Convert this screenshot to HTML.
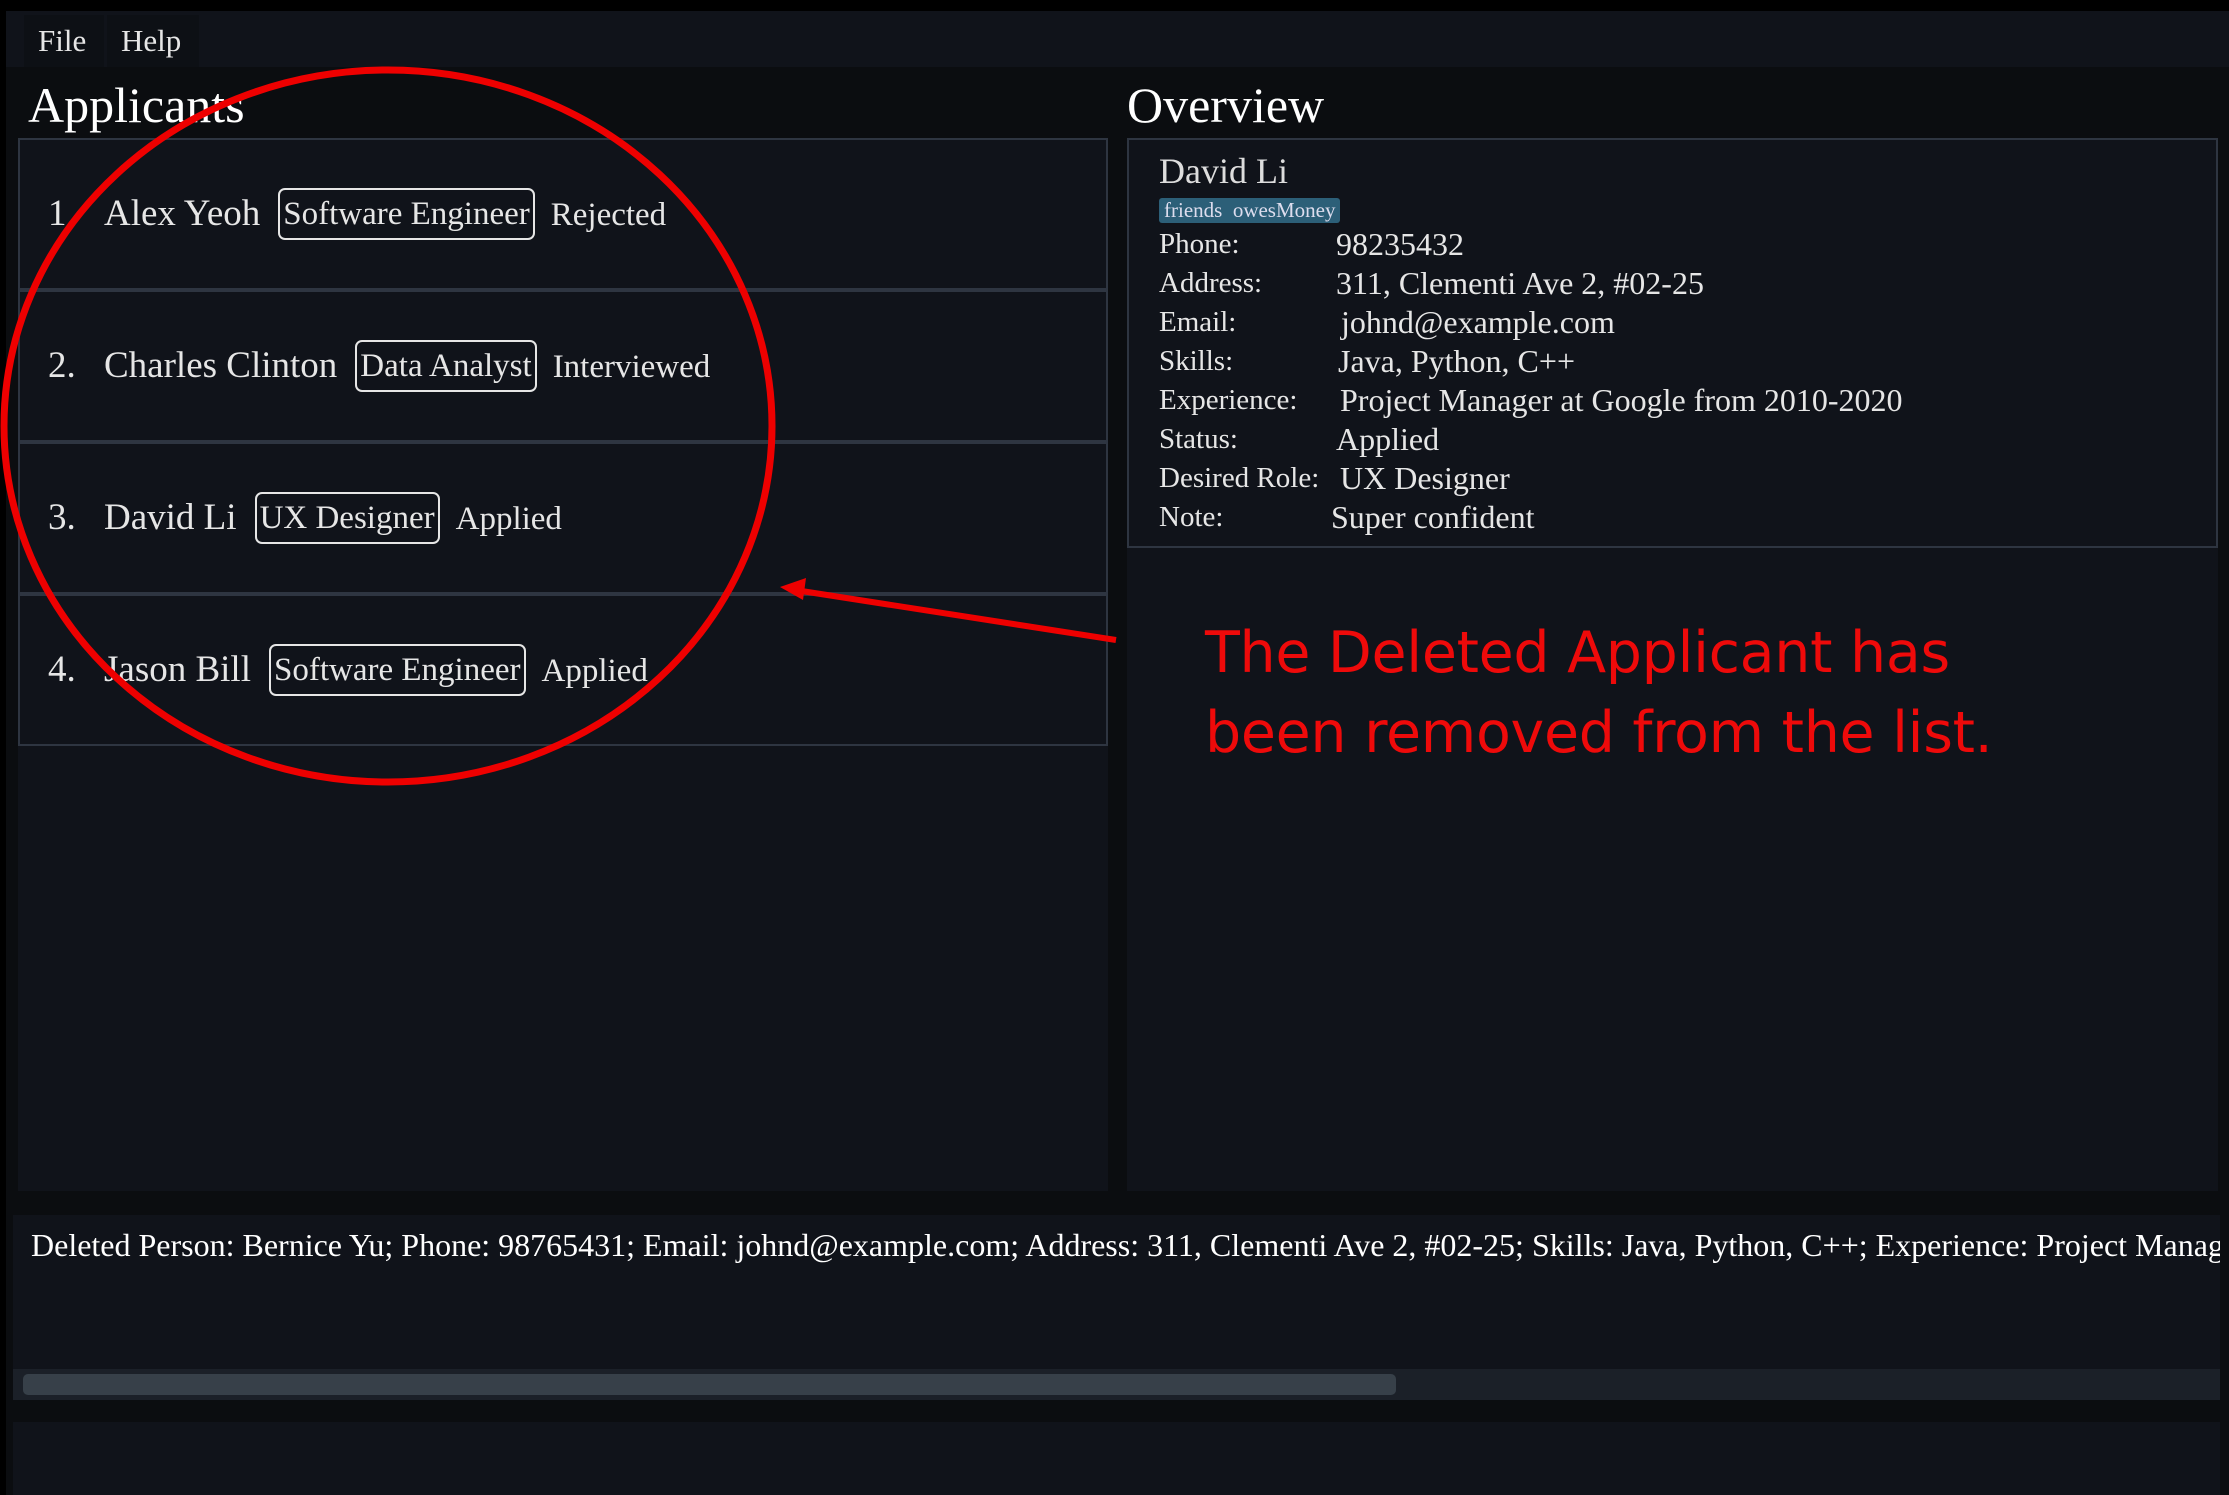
<!DOCTYPE html>
<html><head><meta charset="utf-8"><style>
*{margin:0;padding:0;box-sizing:border-box}
body{width:2229px;height:1495px;background:#000;position:relative;overflow:hidden;font-family:"Liberation Serif",serif;color:#e6e6e6}
.a{position:absolute;white-space:nowrap}
.bg{left:6px;top:11px;width:2223px;height:1484px;background:#0b0d10}
.menu{left:6px;top:11px;width:2223px;height:56px;background:#10131a}
.mi{top:15px;height:52px;background:#0d1015;font-size:31px;line-height:52px;padding-left:14px}
.h{font-size:50px;color:#fff}
.list{left:18px;top:138px;width:1090px;height:1053px;background:#10131a}
.row{left:18px;width:1090px;height:152px;border:2px solid #2e3541;background:#10131a}
.rt{font-size:37px;top:0;line-height:148px}
.s{font-size:33px}
.tag{display:inline-block;border:2px solid #e6e6e6;border-radius:7px;padding:0 3px;line-height:48px;margin:0 16px 0 18px;vertical-align:middle;position:relative;top:-3px;font-size:33px}
.right{left:1127px;top:138px;width:1091px;height:1053px;background:#10131a}
.card{left:1127px;top:138px;width:1091px;height:410px;border:2px solid #2e3541}
.lab{font-size:29px;left:1159px}
.val{font-size:32px}
.red{color:#ee0a0a;font-family:"DejaVu Sans","Liberation Sans",sans-serif;font-size:57px;left:1205px;letter-spacing:-0.3px}
</style></head><body>
<div class="a bg"></div>
<div class="a menu"></div>
<div class="a mi" style="left:24px;width:80px">File</div>
<div class="a mi" style="left:107px;width:92px">Help</div>
<div class="a h" style="left:28px;top:76px">Applicants</div>
<div class="a h" style="left:1127px;top:76px">Overview</div>
<div class="a list"></div>
<div class="a row" style="top:138px"><div class="a rt" style="left:28px">1.</div><div class="a rt" style="left:84px">Alex Yeoh<span class="tag">Software Engineer</span><span class="s">Rejected</span></div></div>
<div class="a row" style="top:290px"><div class="a rt" style="left:28px">2.</div><div class="a rt" style="left:84px">Charles Clinton<span class="tag">Data Analyst</span><span class="s">Interviewed</span></div></div>
<div class="a row" style="top:442px"><div class="a rt" style="left:28px">3.</div><div class="a rt" style="left:84px">David Li<span class="tag">UX Designer</span><span class="s">Applied</span></div></div>
<div class="a row" style="top:594px"><div class="a rt" style="left:28px">4.</div><div class="a rt" style="left:84px">Jason Bill<span class="tag">Software Engineer</span><span class="s">Applied</span></div></div>
<div class="a right"></div>
<div class="a card"></div>
<div class="a" style="left:1159px;top:150px;font-size:36px;color:#ddd">David Li</div>
<div class="a" style="left:1159px;top:198px;height:25px;background:#2c5f78;border-radius:3px;font-size:21px;line-height:25px;color:#dde;padding:0 5px">friends&nbsp;&nbsp;owesMoney</div>
<div class="a lab" style="top:228px">Phone:</div><div class="a val" style="left:1336px;top:226px">98235432</div>
<div class="a lab" style="top:267px">Address:</div><div class="a val" style="left:1336px;top:265px">311, Clementi Ave 2, #02-25</div>
<div class="a lab" style="top:306px">Email:</div><div class="a val" style="left:1341px;top:304px">johnd@example.com</div>
<div class="a lab" style="top:345px">Skills:</div><div class="a val" style="left:1338px;top:343px">Java, Python, C++</div>
<div class="a lab" style="top:384px">Experience:</div><div class="a val" style="left:1340px;top:382px">Project Manager at Google from 2010-2020</div>
<div class="a lab" style="top:423px">Status:</div><div class="a val" style="left:1336px;top:421px">Applied</div>
<div class="a lab" style="top:462px">Desired Role:</div><div class="a val" style="left:1340px;top:460px">UX Designer</div>
<div class="a lab" style="top:501px">Note:</div><div class="a val" style="left:1331px;top:499px">Super confident</div>
<div class="a red" style="top:620px">The Deleted Applicant has</div>
<div class="a red" style="top:700px">been removed from the list.</div>
<div class="a" style="left:13px;top:1215px;width:2207px;height:185px;background:#10131a;overflow:hidden">
<div class="a" style="left:18px;top:12px;font-size:32px;color:#fff">Deleted Person: Bernice Yu; Phone: 98765431; Email: johnd@example.com; Address: 311, Clementi Ave 2, #02-25; Skills: Java, Python, C++; Experience: Project Manager</div>
</div>
<div class="a" style="left:13px;top:1369px;width:2207px;height:31px;background:#1b2028"></div>
<div class="a" style="left:23px;top:1374px;width:1373px;height:21px;background:#374049;border-radius:5px"></div>
<div class="a" style="left:13px;top:1422px;width:2207px;height:73px;background:#10131a"></div>
<svg class="a" style="left:0;top:0" width="2229" height="1495">
<ellipse cx="388" cy="426" rx="384" ry="356" fill="none" stroke="#ee0000" stroke-width="7"/>
<line x1="1116" y1="640" x2="795" y2="590" stroke="#ee0000" stroke-width="6"/>
<polygon points="780,587 806,578 803,600" fill="#ee0000"/>
</svg>
</body></html>
